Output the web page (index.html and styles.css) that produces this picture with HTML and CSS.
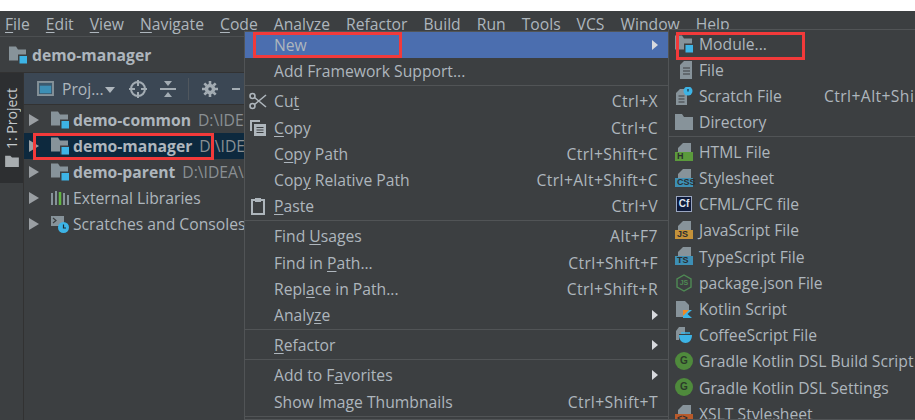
FILE: index.html
```html
<!DOCTYPE html>
<html lang="en">
<head>
  <meta charset="UTF-8" />
  <meta name="viewport" content="width=device-width, initial-scale=1" />
  <title>demo-manager</title>
  <link rel="stylesheet" href="styles.css">
</head>
<body>
  <svg class="defs" width="0" height="0">
    <symbol id="folder" viewBox="0 0 18 16"><path d="M0 0h7l2 3h9v13H0z" fill="#87939a"/></symbol>
    <symbol id="module" viewBox="0 0 18 17"><path d="M0 0h7l2 3h8v11H0z" fill="#87939a"/><rect x="9" y="8" width="9" height="9" fill="#3c3f41"/><rect x="10.500" y="9.500" width="7.500" height="7.500" fill="#3db4e6"/></symbol>
    <symbol id="doc" viewBox="0 0 14 18"><path d="M5 0h8v18H1V4z" fill="#87939a"/><path d="M4 7h7M4 10h7M4 13h7" stroke="#3c3f41" stroke-width="1.200"/></symbol>
    <symbol id="filetop" viewBox="0 0 18 9"><path d="M8 0h8v9H3V5z" fill="#87939a"/></symbol>
  </svg>

  <div class="topstrip"></div>
  <nav class="menubar">
    <span><u>F</u>ile</span><span><u>E</u>dit</span><span><u>V</u>iew</span><span><u>N</u>avigate</span><span><u>C</u>ode</span><span>Analyze</span><span><u>R</u>efactor</span><span><u>B</u>uild</span><span>R<u>u</u>n</span><span><u>T</u>ools</span><span>VC<u>S</u></span><span><u>W</u>indow</span><span><u>H</u>elp</span>
  </nav>
  <div class="navbar">
    <svg class="ico18"><use href="#module"/></svg>
    <b>demo-manager</b>
  </div>

  <div class="main">
    <aside class="sidestrip">
      <div class="sidetab">
        <span class="sidelabel">1: Project</span>
        <svg class="sidefolder" viewBox="0 0 16 14"><path d="M0 1h6l2 2h8v11H0z" fill="#a8adb0"/></svg>
      </div>
    </aside>
    <section class="project">
      <div class="toolbar">
        <svg class="winicon" viewBox="0 0 18 16"><rect x="1" y="1" width="16" height="14" fill="#3c5a6e" stroke="#87939a" stroke-width="2"/><rect x="3" y="5" width="12" height="8" fill="#3d8fb5"/></svg>
        <span class="projname">Proj...</span>
        <span class="caret"></span>
        <svg class="tool first" viewBox="0 0 18 18"><circle cx="9" cy="9" r="7" fill="none" stroke="#a3acb3" stroke-width="2"/><path d="M9 0v6M9 12v6M0 9h6M12 9h6" stroke="#a3acb3" stroke-width="2"/></svg>
        <svg class="tool" viewBox="0 0 18 18"><path d="M1 9h16" stroke="#a3acb3" stroke-width="2"/><path d="M5 1h8L9 6zM5 17h8l-4-5z" fill="#a3acb3"/></svg>
        <span class="toolsep"></span>
        <svg class="tool" viewBox="0 0 18 18"><path d="M9 5.500a3.500 3.500 0 1 0 0 7 3.500 3.500 0 0 0 0-7z" fill="none" stroke="#a3acb3" stroke-width="3.500"/><path d="M9 1v3M9 14v3M1 9h3M14 9h3M3.300 3.300l2.200 2.200M12.500 12.500l2.200 2.200M3.300 14.700l2.200-2.200M12.500 5.500l2.200-2.200" stroke="#a3acb3" stroke-width="2.600"/></svg>
        <span class="minus"></span>
      </div>
      <ul class="tree">
        <li><span class="arrow"></span><svg class="ico18"><use href="#module"/></svg><b>demo-common</b><span class="path">D:\IDE</span></li>
        <li class="selected"><span class="arrow"></span><svg class="ico18"><use href="#module"/></svg><b>demo-manager</b><span class="path">D:\IDE</span></li>
        <li><span class="arrow"></span><svg class="ico18"><use href="#module"/></svg><b>demo-parent</b><span class="path">D:\IDEA\</span></li>
        <li><span class="arrow"></span>
          <svg class="ico18" viewBox="0 0 18 16"><path d="M1 3v12M5 1v14M13 3v12M17 5v10" stroke="#87939a" stroke-width="2"/><path d="M9 2v13" stroke="#62b543" stroke-width="2.500"/></svg>
          External Libraries</li>
        <li><span class="arrow"></span>
          <svg class="ico18" viewBox="0 0 18 18"><rect x="0" y="1" width="13" height="10" fill="#87939a"/><path d="M2 3l3 2.500-3 2.500" fill="none" stroke="#3c3f41" stroke-width="1.200"/><circle cx="12.500" cy="12.500" r="5.500" fill="#3db4e6"/><path d="M12.500 9.500v3.500h2.500" fill="none" stroke="#1d2b33" stroke-width="1.200"/></svg>
          Scratches and Consoles</li>
      </ul>
    </section>
  </div>

  <div class="menu context">
    <div class="item active"><span class="label">New</span><span class="sub"></span></div>
    <div class="item"><span class="label">Add Framework Support...</span></div>
    <hr>
    <div class="item"><svg class="mi" viewBox="0 0 18 18"><circle cx="3.500" cy="4" r="2.500" fill="none" stroke="#aeb6bc" stroke-width="1.600"/><circle cx="3.500" cy="14" r="2.500" fill="none" stroke="#aeb6bc" stroke-width="1.600"/><path d="M5.500 5.500L17 15M5.500 12.500L17 3" stroke="#aeb6bc" stroke-width="1.600"/></svg><span class="label">Cu<u>t</u></span><span class="key">Ctrl+X</span></div>
    <div class="item"><svg class="mi" viewBox="0 0 18 18"><path d="M1 1h10v2H3v9H1z" fill="#aeb6bc"/><rect x="5" y="5" width="12" height="12" fill="#aeb6bc"/><path d="M7.500 8.500h7M7.500 11h7M7.500 13.500h7" stroke="#3c3f41" stroke-width="1.200"/></svg><span class="label"><u>C</u>opy</span><span class="key">Ctrl+C</span></div>
    <div class="item"><span class="label">C<u>o</u>py Path</span><span class="key">Ctrl+Shift+C</span></div>
    <div class="item"><span class="label">Cop<u>y</u> Relative Path</span><span class="key">Ctrl+Alt+Shift+C</span></div>
    <div class="item"><svg class="mi" viewBox="0 0 18 18"><path d="M3 3h12v14H3z" fill="none" stroke="#aeb6bc" stroke-width="2"/><rect x="6" y="1" width="6" height="4" fill="#aeb6bc"/></svg><span class="label"><u>P</u>aste</span><span class="key">Ctrl+V</span></div>
    <hr>
    <div class="item"><span class="label">Find <u>U</u>sages</span><span class="key">Alt+F7</span></div>
    <div class="item"><span class="label">Find in <u>P</u>ath...</span><span class="key">Ctrl+Shift+F</span></div>
    <div class="item"><span class="label">Repl<u>a</u>ce in Path...</span><span class="key">Ctrl+Shift+R</span></div>
    <div class="item"><span class="label">Analy<u>z</u>e</span><span class="sub"></span></div>
    <hr>
    <div class="item"><span class="label"><u>R</u>efactor</span><span class="sub"></span></div>
    <hr>
    <div class="item"><span class="label">Add to F<u>a</u>vorites</span><span class="sub"></span></div>
    <div class="item"><span class="label">Show Image Thumbnails</span><span class="key">Ctrl+Shift+T</span></div>
    <hr>
  </div>

  <div class="menu submenu">
    <div class="item"><svg class="si"><use href="#module"/></svg><span class="label">Module...</span></div>
    <div class="item"><svg class="si" viewBox="-2 0 18 18"><use href="#doc"/></svg><span class="label">File</span></div>
    <div class="item"><svg class="si" viewBox="0 0 18 18"><path d="M5 2h7v16H1V6z" fill="#87939a"/><path d="M3.500 9h6M3.500 12h6M3.500 15h6" stroke="#3c3f41" stroke-width="1.200"/><circle cx="13" cy="4" r="4.500" fill="#3db4e6"/><path d="M13 2v2.500" stroke="#1d2b33" stroke-width="1.200"/></svg><span class="label">Scratch File</span><span class="key">Ctrl+Alt+Shi</span></div>
    <div class="item"><svg class="si"><use href="#folder"/></svg><span class="label">Directory</span></div>
    <hr>
    <div class="item"><span class="si badge"><svg><use href="#filetop"/></svg><i class="html">H</i></span><span class="label">HTML File</span></div>
    <div class="item"><span class="si badge"><svg><use href="#filetop"/></svg><i class="css">CSS</i></span><span class="label">Stylesheet</span></div>
    <div class="item"><span class="si cf">Cf</span><span class="label">CFML/CFC file</span></div>
    <div class="item"><span class="si badge"><svg><use href="#filetop"/></svg><i class="js">JS</i></span><span class="label">JavaScript File</span></div>
    <div class="item"><span class="si badge"><svg><use href="#filetop"/></svg><i class="ts">TS</i></span><span class="label">TypeScript File</span></div>
    <div class="item"><span class="si hex"><svg viewBox="0 0 18 18"><path d="M9 1l7 4v8l-7 4-7-4V5z" fill="none" stroke="#4f8a54" stroke-width="1.400"/></svg><i>JS</i></span><span class="label">package.json File</span></div>
    <div class="item"><svg class="si" viewBox="0 0 18 18"><path d="M1 1h9l4 4v5H8v7H1z" fill="#87939a"/><path d="M8 10h9l-4.500 4 4.500 4H8z" fill="#3db4e6"/><path d="M8 10h6l-6 6z" fill="#f08a24"/></svg><span class="label">Kotlin Script</span></div>
    <div class="item"><svg class="si" viewBox="0 0 18 18"><path d="M4 1h6v7H4v6H1V5z" fill="#87939a"/><path d="M4 9h13c0 5-3 8-6.500 8S4 14 4 9z" fill="#3db4e6"/><path d="M6 7h9" stroke="#3db4e6" stroke-width="1.500"/></svg><span class="label">CoffeeScript File</span></div>
    <div class="item"><span class="si gradle">G</span><span class="label">Gradle Kotlin DSL Build Script</span></div>
    <div class="item"><span class="si gradle">G</span><span class="label">Gradle Kotlin DSL Settings</span></div>
    <div class="item"><span class="si badge"><svg><use href="#filetop"/></svg><i class="xslt">&lt;&gt;</i></span><span class="label">XSLT Stylesheet</span></div>
  </div>

  <div class="mark mark-new"></div>
  <div class="mark mark-module"></div>
  <div class="mark mark-tree"></div>
</body>
</html>
```

FILE: styles.css
```css
* { box-sizing: border-box; }
html, body { height: 100%; }
body {
  margin: 0;
  position: relative;
  overflow: hidden;
  background: #3c3f41;
  color: #aeb6bd;
  font-family: 'Open Sans', 'Noto Sans', sans-serif;
  font-size: 15.7px;
}
.defs { position: absolute; }
u { text-underline-offset: 2px; }
b { font-weight: 700; }

.topstrip { height: 11px; background: #fff; }
.menubar {
  display: flex;
  align-items: center;
  gap: 16px;
  height: 26px;
  padding-left: 5px;
  border-bottom: 1px solid #4c4f51;
}
.navbar {
  display: flex;
  align-items: center;
  gap: 5px;
  height: 36px;
  padding-left: 9px;
  border-bottom: 1px solid #323232;
  color: #aeb6bd;
}
.ico18 { width: 18px; height: 18px; flex: none; }

.main { display: flex; height: 347px; }
.sidestrip { width: 24px; flex: none; background: #3c3f41; border-right: 1px solid #323232; }
.sidetab {
  height: 110px;
  background: #2d2f31;
  display: flex;
  flex-direction: column;
  align-items: center;
}
.sidelabel {
  writing-mode: vertical-rl;
  transform: rotate(180deg);
  font-size: 14px;
  margin-top: 15px;
  color: #c4c9cc;
}
.sidefolder { width: 14px; height: 12px; margin-top: 6px; }

.project { width: 220px; flex: none; overflow: hidden; }
.toolbar {
  display: flex;
  align-items: center;
  height: 32px;
  padding-left: 13px;
  background: #3b4754;
  border-bottom: 1px solid #323232;
}
.winicon { width: 17px; height: 15px; margin-right: 8px; flex: none; }
.projname { color: #aeb6bd; }
.caret {
  width: 0;
  height: 0;
  margin: 2px 0 0 1px;
  border: 5px solid transparent;
  border-top: 6px solid #aeb6bd;
  border-bottom: 0;
}
.tool { width: 18px; height: 18px; margin-left: 12px; flex: none; }
.tool.first { margin-left: 14px; }
.toolsep { width: 1px; height: 22px; margin-left: 11px; background: #50575e; flex: none; }
.minus { width: 8px; height: 2px; margin-left: 13px; background: #a3acb3; flex: none; }

.tree { list-style: none; margin: 2px 0 0; padding: 0; }
.tree li {
  display: flex;
  align-items: center;
  height: 26px;
  padding-left: 5px;
  white-space: nowrap;
  overflow: hidden;
}
.tree .selected { background: #0d293e; }
.arrow {
  width: 0;
  height: 0;
  margin-right: 12px;
  border: 6px solid transparent;
  border-left: 10px solid #9a9fa3;
  border-right: 0;
  flex: none;
}
.tree .ico18 { margin-right: 4px; }
.path { margin-left: 7px; color: #8a8f93; }

.menu {
  position: absolute;
  background: #3c3f41;
  border: 1px solid #515456;
  white-space: nowrap;
  overflow: hidden;
}
.context { left: 244px; top: 31px; width: 425px; height: 389px; }
.submenu { left: 668px; top: 29px; width: 247px; height: 391px; padding-top: 0.6px; border-right: 0; }
.menu hr { margin: 1px 0 2px; border: 0; border-top: 1px solid #515456; }
.submenu hr { margin: 1px 0 1.4px; }
.item {
  display: flex;
  align-items: center;
  height: 26.2px;
  position: relative;
}
.context .item { padding: 0 10px 0 29px; }
.submenu .item { padding-left: 30px; }
.item.active { background: #4b6eaf; }
.label { color: #aeb6bd; }
.key { margin-left: auto; letter-spacing: 0.4px; }
.submenu .key { position: absolute; left: 155px; margin: 0; }
.sub {
  margin-left: auto;
  width: 0;
  height: 0;
  border: 5px solid transparent;
  border-left: 6px solid #d8dade;
  border-right: 0;
}
.mi { position: absolute; left: 4px; top: 4px; width: 18px; height: 18px; }
.si {
  position: absolute;
  left: 6px;
  top: 4px;
  width: 18px;
  height: 18px;
}
.badge svg { display: block; width: 18px; height: 9px; }
.badge i {
  display: block;
  height: 9px;
  font: 700 9px/9px 'Liberation Sans', sans-serif;
  color: #2b2d2f;
  padding-left: 2px;
}
.html { background: #5b9a3c; }
.css { background: #3d8fb5; }
.js { background: #c4923a; }
.ts { background: #3d8fb5; }
.xslt { background: #b85a2a; }
.cf {
  left: 7px;
  top: 5px;
  width: 16px;
  height: 16px;
  background: #0e1a3a;
  border: 1px solid #9aa6c0;
  color: #dfe6f0;
  font: 700 10px/14px 'Liberation Sans', sans-serif;
  text-align: center;
}
.hex i {
  position: absolute;
  left: 0;
  top: 0;
  width: 18px;
  text-align: center;
  font: 700 7px/18px 'Liberation Sans', sans-serif;
  color: #4f8a54;
}
.gradle {
  border-radius: 50%;
  background: #4f8a3c;
  color: #2b3a2a;
  font: 700 10px/18px 'Liberation Sans', sans-serif;
  text-align: center;
}

.mark { position: absolute; border: 3px solid #f23a3a; pointer-events: none; }
.mark-new { left: 253px; top: 32px; width: 149px; height: 26px; }
.mark-module { left: 676px; top: 32px; width: 129px; height: 28px; }
.mark-tree { left: 33px; top: 133px; width: 181px; height: 27px; }
```
